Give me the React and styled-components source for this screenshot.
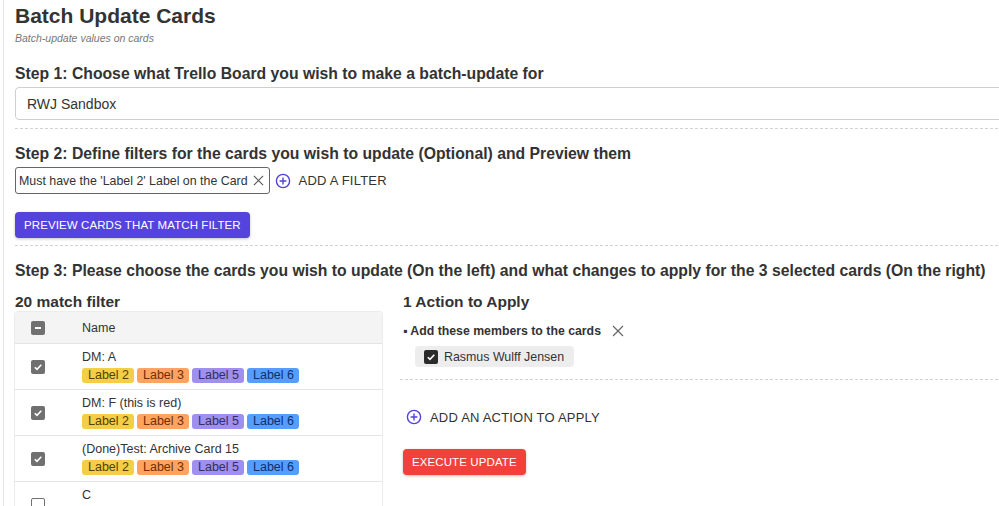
import React from "react";
import styled, { createGlobalStyle } from "styled-components";

const GlobalStyle = createGlobalStyle`
  html, body {
    margin: 0;
    padding: 0;
    background: #fff;
    overflow: hidden;
  }
  body {
    font-family: "Liberation Sans", Arial, Helvetica, sans-serif;
    color: #333;
  }
`;

const Page = styled.div`
  width: 1040px;
  height: 506px;
  margin-left: 3px;
  border-left: 1px solid #e6e6e6;
  padding: 4px 0 0 11px;
  box-sizing: border-box;
  overflow: hidden;
`;

const Title = styled.h1`
  margin: 0;
  font-size: 21px;
  line-height: 24px;
  font-weight: 700;
  color: #333;
`;

const Subtitle = styled.div`
  font-size: 10.5px;
  font-style: italic;
  color: #777;
  line-height: 12px;
  margin-top: 4px;
`;

const StepTitle = styled.h2`
  margin: ${(p) => p.$top || 0}px 0 0;
  font-size: 15.75px;
  line-height: 20px;
  font-weight: 700;
  color: #333;
  white-space: nowrap;
`;

const SelectBox = styled.div`
  margin-top: 3px;
  height: 33px;
  border: 1px solid #cfcfcf;
  border-radius: 4px;
  box-sizing: border-box;
  display: flex;
  align-items: center;
  padding-left: 11px;
  font-size: 14px;
  color: #333;
`;

const Dotted = styled.div`
  margin-top: ${(p) => p.$top || 0}px;
  border-top: 1px dashed #d2d2d2;
`;

const FilterRow = styled.div`
  display: flex;
  align-items: center;
  gap: 5px;
  margin-top: 3px;
`;

const FilterChip = styled.div`
  height: 27px;
  box-sizing: border-box;
  border: 1px solid #666;
  border-radius: 3px;
  display: flex;
  align-items: center;
  gap: 5px;
  padding: 0 5px 0 3px;
  font-size: 12.4px;
  color: #333;
  white-space: nowrap;
`;

const TextAction = styled.div`
  display: flex;
  align-items: center;
  gap: 8px;
  margin-top: ${(p) => p.$top || 0}px;
  padding-left: ${(p) => p.$pad || 0}px;
  font-size: 13px;
  color: #333;
  letter-spacing: 0.2px;
`;

const Button = styled.div`
  display: inline-flex;
  align-items: center;
  height: 26px;
  padding: 0 9px;
  border-radius: 4px;
  background: ${(p) => p.$bg};
  color: #fff;
  font-size: 11.5px;
  letter-spacing: 0.1px;
  box-shadow: 0 1px 3px rgba(0, 0, 0, 0.25);
  white-space: nowrap;
`;

const ButtonWrap = styled.div`
  margin-top: ${(p) => p.$top || 0}px;
`;

const Columns = styled.div`
  display: grid;
  grid-template-columns: 367px 1fr;
  column-gap: 21px;
  margin-top: 11px;
`;

const ColTitle = styled.h3`
  margin: 0;
  font-size: 15.5px;
  line-height: 20px;
  font-weight: 700;
  color: #333;
`;

const Table = styled.div`
  box-shadow: 0 0 0 1px #ececec, 0 1px 2px rgba(0, 0, 0, 0.06);
  border-radius: 3px;
  overflow: hidden;
`;

const HeadRow = styled.div`
  display: grid;
  grid-template-columns: 67px 1fr;
  align-items: center;
  height: 31px;
  background: #f4f4f4;
  font-size: 12.5px;
  color: #333;
  border-bottom: 1px solid #e4e4e4;
`;

const Row = styled.div`
  display: grid;
  grid-template-columns: 67px 1fr;
  align-items: center;
  height: 45px;
  border-bottom: 1px solid #e4e4e4;
`;

const CheckCell = styled.div`
  display: flex;
  padding-left: 16px;
`;

const CardCell = styled.div`
  display: flex;
  flex-direction: column;
  gap: 3px;
`;

const CardName = styled.div`
  font-size: 12.5px;
  line-height: 15px;
  color: #333;
`;

const Labels = styled.div`
  display: flex;
  gap: 3px;
`;

const Label = styled.span`
  display: inline-block;
  width: 52px;
  height: 15px;
  line-height: 15px;
  box-sizing: border-box;
  padding-left: 6px;
  border-radius: 3px;
  font-size: 12.5px;
  background: ${(p) => p.$bg};
  color: ${(p) => p.$fg};
`;

const Box = styled.span`
  width: 14px;
  height: 14px;
  border-radius: 2px;
  box-sizing: border-box;
  display: inline-flex;
  align-items: center;
  justify-content: center;
  background: ${(p) => (p.$on ? p.$color : "#fff")};
  border: ${(p) => (p.$on ? "none" : `1.5px solid ${p.$color}`)};
`;

const ActionTitle = styled.div`
  display: flex;
  align-items: center;
  gap: 11px;
  margin-top: 12px;
  font-size: 12.3px;
  font-weight: 700;
  color: #333;
`;

const MemberChip = styled.div`
  display: inline-flex;
  align-items: center;
  gap: 6px;
  margin: 8px 0 0 12px;
  height: 21px;
  padding: 0 10px 0 9px;
  border-radius: 4px;
  background: #ededed;
  font-size: 12.4px;
  color: #333;
`;

const ActionDivider = styled.div`
  margin: 12px 0 0 -3px;
  border-top: 1px dashed #d2d2d2;
`;

const labelColors = {
  "Label 2": ["#f5cd47", "#533f04"],
  "Label 3": ["#fea362", "#702e00"],
  "Label 4": ["#f87168", "#5d1f1a"],
  "Label 5": ["#9f8fef", "#352c63"],
  "Label 6": ["#579dff", "#09326c"],
};

const cards = [
  { name: "DM: A", on: true, labels: ["Label 2", "Label 3", "Label 5", "Label 6"] },
  { name: "DM: F (this is red)", on: true, labels: ["Label 2", "Label 3", "Label 5", "Label 6"] },
  { name: "(Done)Test: Archive Card 15", on: true, labels: ["Label 2", "Label 3", "Label 5", "Label 6"] },
  { name: "C", on: false, labels: ["Label 2", "Label 3", "Label 4", "Label 5", "Label 6"] },
];

const PlusCircle = () => (
  <svg width="16" height="16" viewBox="0 0 16 16">
    <circle cx="8" cy="8" r="6.6" fill="none" stroke="#5243d6" strokeWidth="1.4" />
    <path d="M8 4.6v6.8M4.6 8h6.8" stroke="#5243d6" strokeWidth="1.4" />
  </svg>
);

const Cross = ({ size = 11, color = "#555" }) => (
  <svg width={size} height={size} viewBox="0 0 12 12">
    <path d="M1 1l10 10M11 1L1 11" stroke={color} strokeWidth="1.2" />
  </svg>
);

const Check = ({ on = true, color = "#707070", indeterminate }) => (
  <Box $on={on} $color={color}>
    {on && !indeterminate && (
      <svg width="10" height="10" viewBox="0 0 10 10">
        <path d="M1.8 5.2l2.2 2.2 4.3-4.6" fill="none" stroke="#fff" strokeWidth="1.6" />
      </svg>
    )}
    {on && indeterminate && (
      <svg width="10" height="10" viewBox="0 0 10 10">
        <path d="M2 5h6" stroke="#fff" strokeWidth="1.8" />
      </svg>
    )}
  </Box>
);

export default function App() {
  return (
    <>
      <GlobalStyle />
      <Page>
        <Title>Batch Update Cards</Title>
        <Subtitle>Batch-update values on cards</Subtitle>

        <StepTitle $top={20}>Step 1: Choose what Trello Board you wish to make a batch-update for</StepTitle>
        <SelectBox>RWJ Sandbox</SelectBox>
        <Dotted $top={8} />

        <StepTitle $top={15}>Step 2: Define filters for the cards you wish to update (Optional) and Preview them</StepTitle>
        <FilterRow>
          <FilterChip>
            Must have the 'Label 2' Label on the Card
            <Cross />
          </FilterChip>
          <TextAction>
            <PlusCircle />
            ADD A FILTER
          </TextAction>
        </FilterRow>
        <ButtonWrap $top={18}>
          <Button $bg="#5543de">PREVIEW CARDS THAT MATCH FILTER</Button>
        </ButtonWrap>
        <Dotted $top={7} />

        <StepTitle $top={15}>
          Step 3: Please choose the cards you wish to update (On the left) and what changes to apply for the 3 selected cards (On the right)
        </StepTitle>

        <Columns>
          <div>
            <ColTitle>20 match filter</ColTitle>
            <Table>
              <HeadRow>
                <CheckCell>
                  <Check indeterminate />
                </CheckCell>
                <span>Name</span>
              </HeadRow>
              {cards.map((c) => (
                <Row key={c.name}>
                  <CheckCell>
                    <Check on={c.on} />
                  </CheckCell>
                  <CardCell>
                    <CardName>{c.name}</CardName>
                    <Labels>
                      {c.labels.map((l) => (
                        <Label key={l} $bg={labelColors[l][0]} $fg={labelColors[l][1]}>
                          {l}
                        </Label>
                      ))}
                    </Labels>
                  </CardCell>
                </Row>
              ))}
            </Table>
          </div>

          <div>
            <ColTitle>1 Action to Apply</ColTitle>
            <ActionTitle>
              <span>▪ Add these members to the cards</span>
              <Cross size={12} color="#666" />
            </ActionTitle>
            <MemberChip>
              <Check color="#2b2b2b" />
              Rasmus Wulff Jensen
            </MemberChip>
            <ActionDivider />
            <TextAction $pad={3} $top={29}>
              <PlusCircle />
              ADD AN ACTION TO APPLY
            </TextAction>
            <ButtonWrap $top={24}>
              <Button $bg="#f2413a">EXECUTE UPDATE</Button>
            </ButtonWrap>
          </div>
        </Columns>
      </Page>
    </>
  );
}
